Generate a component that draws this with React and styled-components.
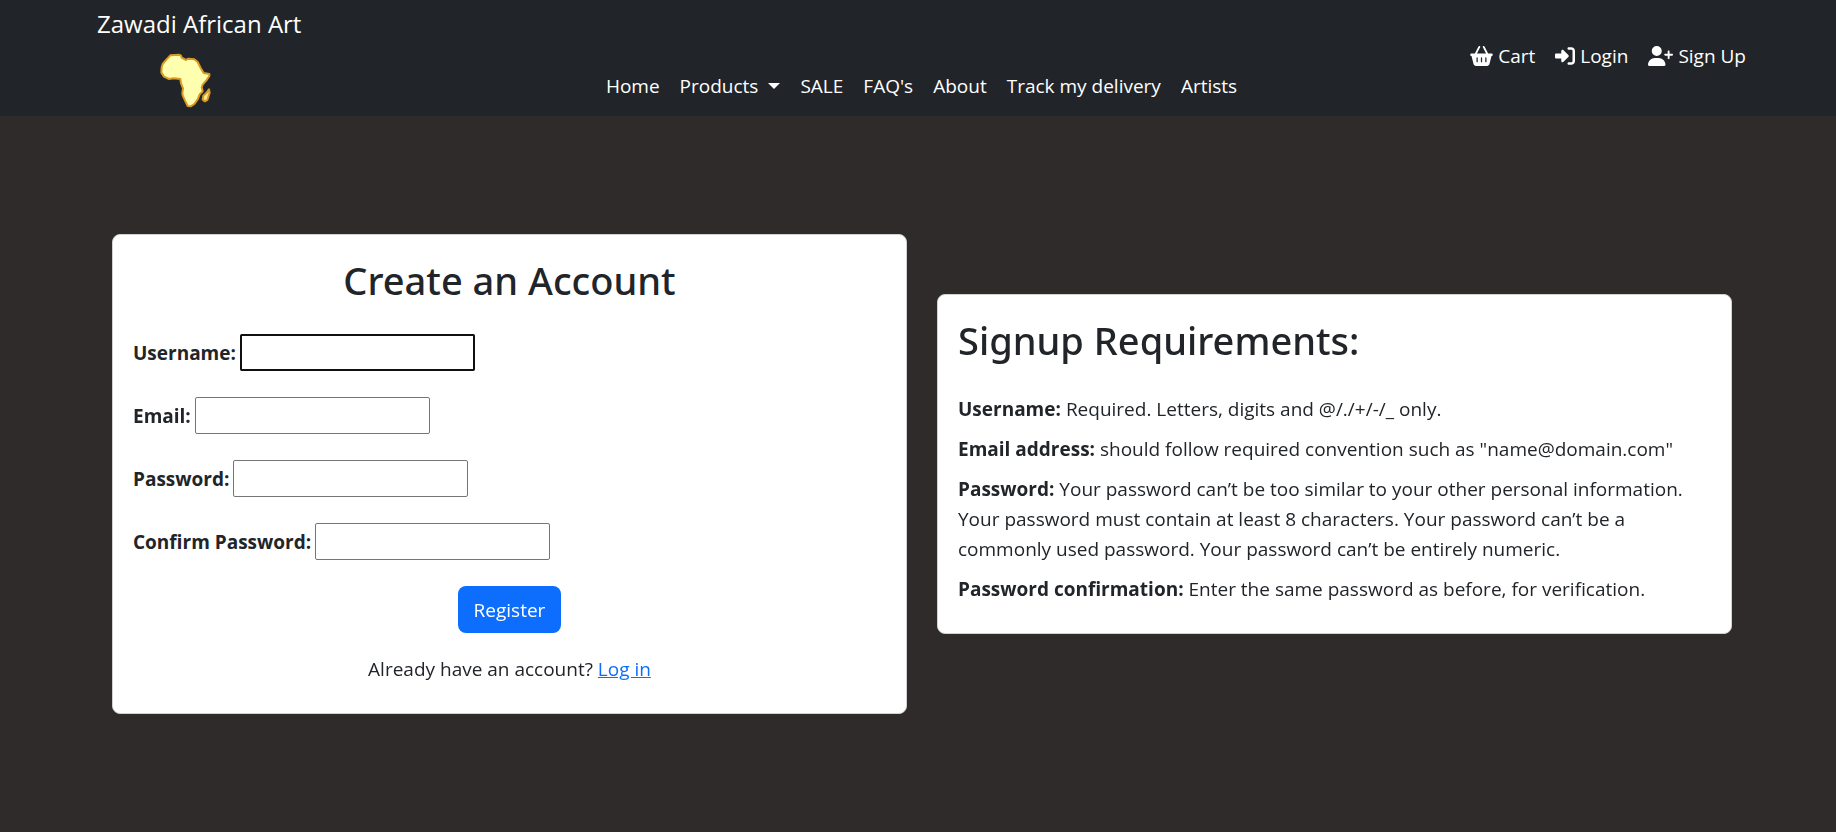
import React from 'react';
import styled, { createGlobalStyle } from 'styled-components';
import { FaBasketShopping, FaRightToBracket, FaUserPlus } from 'react-icons/fa6';

const GlobalStyle = createGlobalStyle`
  *, *::before, *::after { box-sizing: border-box; }
  body {
    margin: 0;
    background: #2f2b2a;
    color: #212529;
    font-family: "Open Sans", "Noto Sans", sans-serif;
    font-size: 19px;
    line-height: 30px;
  }
`;

const Page = styled.div`
  min-height: 100vh;
  display: flex;
  flex-direction: column;
`;

const Navbar = styled.header`
  display: grid;
  grid-template-columns: 1fr auto 1fr;
  min-height: 116px;
  padding: 5px 90px 5px 97px;
  background: #212529;
`;

const Brand = styled.a`
  justify-self: start;
  display: flex;
  flex-direction: column;
  align-items: center;
  gap: 10px;
  color: #fff;
  font-size: 24px;
  line-height: 38px;
  text-decoration: none;
  white-space: nowrap;
`;

const Logo = styled.svg`
  width: 54px;
  height: 56px;
  margin-right: 26px;
`;

const NavLinks = styled.nav`
  align-self: end;
  display: flex;
  gap: 20px;
  padding-bottom: 10px;
`;

const UserLinks = styled.nav`
  align-self: center;
  justify-self: end;
  display: flex;
  gap: 20px;
  padding-bottom: 5px;
`;

const NavLink = styled.a`
  display: inline-flex;
  align-items: center;
  gap: 5px;
  color: #fff;
  text-decoration: none;
  white-space: nowrap;
  svg {
    flex: none;
    width: ${(p) => p.$iconWidth}px;
    height: 20px;
  }
`;

const Caret = styled.span`
  margin-left: 5px;
  border-top: 6px solid #fff;
  border-left: 6px solid transparent;
  border-right: 6px solid transparent;
`;

const Main = styled.main`
  flex: 1;
  display: grid;
  grid-template-columns: 1fr 1fr;
  gap: 30px;
  align-items: center;
  padding: 20px 104px 20px 112px;
`;

const Card = styled.section`
  padding: 21px 20px 29px;
  margin-bottom: ${(p) => (p.$raised ? '20px' : '0')};
  background: #fff;
  border: 1px solid #d3d1d1;
  border-radius: 8px;
`;

const Title = styled.h1`
  margin: 0 0 30px;
  font-family: "Noto Sans", "Open Sans", sans-serif;
  font-size: 38px;
  line-height: 48px;
  font-weight: 500;
  text-align: ${(p) => (p.$center ? 'center' : 'left')};
`;

const Form = styled.form`
  display: flex;
  flex-direction: column;
  gap: 26px;
`;

const Field = styled.div`
  display: flex;
  align-items: center;
  gap: 4px;
`;

const Label = styled.label`
  font-weight: 700;
`;

const Input = styled.input`
  width: 235px;
  height: 37px;
  padding: 1px 2px;
  border: 1px solid #767676;
  border-radius: 2px;
  background: #fff;
  font: inherit;
  &:focus {
    outline: 2px solid #101010;
    outline-offset: -2px;
  }
`;

const Submit = styled.button`
  align-self: center;
  height: 47px;
  padding: 0 16px;
  border: 0;
  border-radius: 8px;
  background: #0d6efd;
  color: #fff;
  font: inherit;
`;

const Note = styled.p`
  margin: 21px 0 0;
  text-align: center;
  a { color: #0d6efd; }
`;

const Requirement = styled.p`
  margin: 0;
  & + & { margin-top: 10px; }
  strong { font-weight: 700; }
`;

const fields = [
  { id: 'username', label: 'Username:', type: 'text', autoFocus: true },
  { id: 'email', label: 'Email:', type: 'email' },
  { id: 'password1', label: 'Password:', type: 'password' },
  { id: 'password2', label: 'Confirm Password:', type: 'password' },
];

const requirements = [
  ['Username:', 'Required. Letters, digits and @/./+/-/_ only.'],
  ['Email address:', 'should follow required convention such as "name@domain.com"'],
  ['Password:', 'Your password can’t be too similar to your other personal information. Your password must contain at least 8 characters. Your password can’t be a commonly used password. Your password can’t be entirely numeric.'],
  ['Password confirmation:', 'Enter the same password as before, for verification.'],
];

function AfricaLogo() {
  return (
    <Logo viewBox="26 21 162 168" aria-hidden="true">
      <g stroke="#d99a26" strokeWidth="6" strokeLinejoin="round">
        <path fill="#ffffb0" d="M60 28 L86 26 L92 29 L94 35 L107 42 L114 38 L132 40 L142 48 L151 66 L160 81 L177 84 L177 90 L168 103 L157 116 L154 124 L157 136 L148 145 L142 160 L132 174 L121 181 L112 180 L104 164 L97 148 L96 141 L98 127 L92 112 L90 99 L70 97 L56 99 L41 92 L33 80 L34 64 L37 54 L48 41 Z" />
        <path fill="#ffe98c" d="M176 130 L178 140 L171 162 L164 166 L157 161 L159 149 L167 142 Z" />
      </g>
    </Logo>
  );
}

export default function App() {
  return (
    <>
      <GlobalStyle />
      <Page>
        <Navbar>
          <Brand href="#">
            Zawadi African Art
            <AfricaLogo />
          </Brand>
          <NavLinks aria-label="Main">
            <NavLink href="#">Home</NavLink>
            <NavLink href="#">Products<Caret /></NavLink>
            <NavLink href="#">SALE</NavLink>
            <NavLink href="#">FAQ's</NavLink>
            <NavLink href="#">About</NavLink>
            <NavLink href="#">Track my delivery</NavLink>
            <NavLink href="#">Artists</NavLink>
          </NavLinks>
          <UserLinks aria-label="Account">
            <NavLink href="#" $iconWidth={23}><FaBasketShopping />Cart</NavLink>
            <NavLink href="#" $iconWidth={20}><FaRightToBracket />Login</NavLink>
            <NavLink href="#" $iconWidth={25}><FaUserPlus />Sign Up</NavLink>
          </UserLinks>
        </Navbar>
        <Main>
          <Card>
            <Title $center>Create an Account</Title>
            <Form>
              {fields.map(({ id, label, type, autoFocus }) => (
                <Field key={id}>
                  <Label htmlFor={id}>{label}</Label>
                  <Input id={id} name={id} type={type} autoFocus={autoFocus} />
                </Field>
              ))}
              <Submit type="submit">Register</Submit>
            </Form>
            <Note>Already have an account? <a href="#">Log in</a></Note>
          </Card>
          <Card $raised>
            <Title>Signup Requirements:</Title>
            {requirements.map(([name, text]) => (
              <Requirement key={name}><strong>{name}</strong> {text}</Requirement>
            ))}
          </Card>
        </Main>
      </Page>
    </>
  );
}
